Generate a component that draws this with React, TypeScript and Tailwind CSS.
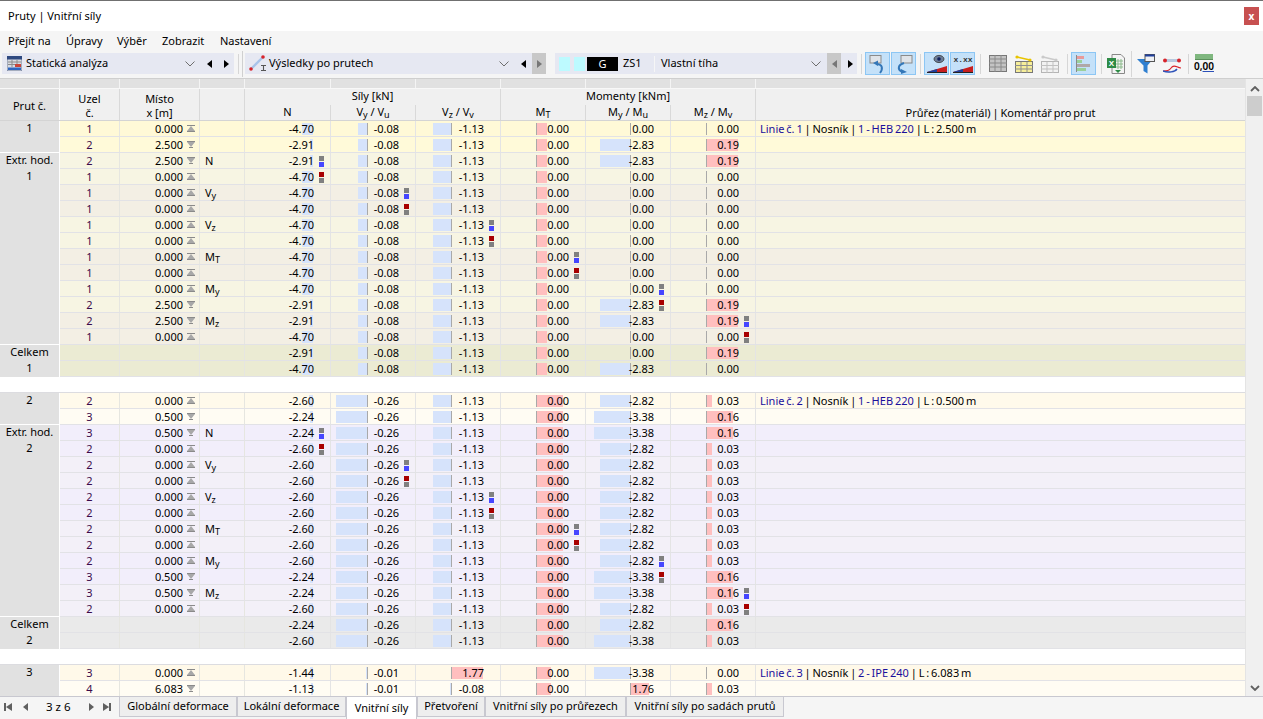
import React from "react";

type Row = {
  first?: string;
  firstLine?: boolean;
  node?: string;
  x?: string;
  dir?: "up" | "down";
  tag?: React.ReactNode;
  v: string[];
  mark?: [number, "max" | "min"];
  bg: string;
};

const cols = ["w-[86px]", "w-[85px]", "w-[85px]", "w-[85px]", "w-[85px]", "w-[85px]"];
const axes = [68, 36, 35, 35, 44, 35];

const barLen: Record<string, number>[] = [
  { "-4.70": -11, "-2.91": -3, "-2.60": -4, "-2.24": -3, "-1.44": -3, "-1.13": -2 },
  { "-0.08": -9, "-0.26": -31, "-0.01": -1 },
  { "-1.13": -18, "1.77": 32, "-0.08": -1 },
  {},
  { "-2.83": -30, "-2.82": -30, "-3.38": -36, "1.76": 19 },
  { "0.19": 32, "0.16": 27, "0.03": 6 },
];

const Sub = ({ c }: { c: string }) => <sub className="text-[9px]">{c}</sub>;

const tags: Record<string, React.ReactNode> = {
  N: "N",
  Vy: <>V<Sub c="y" /></>,
  Vz: <>V<Sub c="z" /></>,
  Mt: <>M<Sub c="T" /></>,
  My: <>M<Sub c="y" /></>,
  Mz: <>M<Sub c="z" /></>,
};

type Pt = { node: string; x: string; dir: "up" | "down"; v: string[] };

function group(
  id: string,
  a: Pt,
  b: Pt,
  ext: [string, Pt, Pt][],
  tot: [string[], string[]],
  bgs: { n1: string; n2: string; ea: string; eb: string; t: string },
): Row[] {
  const rows: Row[] = [
    { first: id, ...a, bg: bgs.n1 },
    { firstLine: true, ...b, bg: bgs.n2 },
  ];
  ext.forEach(([tag, p, q], i) => {
    const bg = i % 2 === 0 ? bgs.ea : bgs.eb;
    rows.push({
      first: i === 0 ? "Extr. hod." : undefined,
      ...p,
      tag: tags[tag],
      mark: [i, "max"],
      bg,
    });
    rows.push({
      first: i === 0 ? id : undefined,
      firstLine: i === 5,
      ...q,
      mark: [i, "min"],
      bg,
    });
  });
  rows.push({ first: "Celkem", v: tot[0], bg: bgs.t });
  rows.push({ first: id, v: tot[1], bg: bgs.t });
  return rows;
}

const g1a: Pt = { node: "1", x: "0.000", dir: "up", v: ["-4.70", "-0.08", "-1.13", "0.00", "0.00", "0.00"] };
const g1b: Pt = { node: "2", x: "2.500", dir: "down", v: ["-2.91", "-0.08", "-1.13", "0.00", "-2.83", "0.19"] };
const g2a: Pt = { node: "2", x: "0.000", dir: "up", v: ["-2.60", "-0.26", "-1.13", "0.00", "-2.82", "0.03"] };
const g2b: Pt = { node: "3", x: "0.500", dir: "down", v: ["-2.24", "-0.26", "-1.13", "0.00", "-3.38", "0.16"] };

const rows1 = group(
  "1",
  g1a,
  g1b,
  [
    ["N", g1b, g1a],
    ["Vy", g1a, g1a],
    ["Vz", g1a, g1a],
    ["Mt", g1a, g1a],
    ["My", g1a, g1b],
    ["Mz", g1b, g1a],
  ],
  [
    ["-2.91", "-0.08", "-1.13", "0.00", "0.00", "0.19"],
    ["-4.70", "-0.08", "-1.13", "0.00", "-2.83", "0.00"],
  ],
  { n1: "bg-[#fff9d7]", n2: "bg-[#fffad9]", ea: "bg-[#f7f5e3]", eb: "bg-[#f3efe4]", t: "bg-[#ebebd3]" },
);

const rows2 = group(
  "2",
  g2a,
  g2b,
  [
    ["N", g2b, g2a],
    ["Vy", g2a, g2a],
    ["Vz", g2a, g2a],
    ["Mt", g2a, g2a],
    ["My", g2a, g2b],
    ["Mz", g2b, g2a],
  ],
  [
    ["-2.24", "-0.26", "-1.13", "0.00", "-2.82", "0.16"],
    ["-2.60", "-0.26", "-1.13", "0.00", "-3.38", "0.03"],
  ],
  { n1: "bg-[#fffaeb]", n2: "bg-[#fffcf3]", ea: "bg-[#f2eefb]", eb: "bg-[#f3f0f8]", t: "bg-[#eaeaea]" },
);

const rows3: Row[] = [
  { first: "3", node: "3", x: "0.000", dir: "up", v: ["-1.44", "-0.01", "1.77", "0.00", "-3.38", "0.00"], bg: "bg-[#fff9e9]" },
  { node: "4", x: "6.083", dir: "down", v: ["-1.13", "-0.01", "-0.08", "0.00", "1.76", "0.03"], bg: "bg-[#fffcf3]" },
];

const XIcon = ({ dir }: { dir: "up" | "down" }) => (
  <svg width="8" height="7" viewBox="0 0 8 7" className="ml-[4px] shrink-0">
    {dir === "up" ? (
      <>
        <rect x="0" y="0" width="8" height="1" fill="#8a8a8a" />
        <path d="M4 1 L8 6 H0 Z" fill="#a8a8a8" />
        <rect x="0" y="6" width="8" height="1" fill="#8a8a8a" />
      </>
    ) : (
      <>
        <rect x="0" y="0" width="8" height="1" fill="#8a8a8a" />
        <path d="M0 1 H8 L4 6 Z" fill="#a8a8a8" />
        <rect x="2" y="6" width="4" height="1" fill="#8a8a8a" />
      </>
    )}
  </svg>
);

function Comment({ a, b, c }: { a: string; b: string; c: string }) {
  return (
    <span className="[word-spacing:-1px]">
      <span className="text-[#1a0f9c]">{a}</span> | <span>Nosník</span> |{" "}
      <span className="text-[#1a0f9c]">{b}</span> | {c}
    </span>
  );
}

function DataCell({ row, i, mt }: { row: Row; i: number; mt: number }) {
  const val = row.v[i];
  const len = i === 3 ? mt : barLen[i][val] ?? 0;
  const axis = axes[i];
  const left = len < 0 ? axis + len : axis;
  const marked = row.mark && row.mark[0] === i;
  return (
    <div className={`${cols[i]} relative h-full border-r border-[#e4e4e4] flex items-center justify-end pr-[16px]`}>
      {len !== 0 && (
        <div
          className={`absolute top-[2px] h-[12px] ${len < 0 ? "bg-[#d6e3fb]" : "bg-[#ffbfbf]"}`}
          style={{ left, width: Math.abs(len) }}
        />
      )}
      {i !== 0 && <div className="absolute top-[2px] h-[12px] w-px bg-[#a9a9a9]" style={{ left: axis }} />}
      <span className="relative">{val}</span>
      {marked && (
        <div className="absolute right-[6px] top-[3px] flex flex-col gap-px">
          <div className={`w-[5px] h-[5px] ${row.mark![1] === "max" ? "bg-[#808080]" : "bg-[#a80000]"}`} />
          <div className={`w-[5px] h-[5px] ${row.mark![1] === "max" ? "bg-[#4646ff]" : "bg-[#808080]"}`} />
        </div>
      )}
    </div>
  );
}

function TableRow({ row, mt, comment }: { row: Row; mt: number; comment?: React.ReactNode }) {
  return (
    <div className="flex h-4 shrink-0 leading-4">
      <div className={`w-[60px] h-full bg-[#e1e1e1] border-r border-white text-center leading-[14px] ${row.firstLine ? "border-b" : ""}`}>
        {row.first}
      </div>
      <div className={`flex flex-1 h-full border-b border-[#e2e2e6] ${row.bg}`}>
        <div className="w-[60px] h-full border-r border-[#e6e6e0] text-center text-[#3a0a4a]">{row.node}</div>
        <div className="w-[80px] h-full border-r border-[#e6e6e0] flex items-center justify-end pr-[4px]">
          {row.x && (
            <>
              <span>{row.x}</span>
              {row.dir && <XIcon dir={row.dir} />}
            </>
          )}
        </div>
        <div className="w-[45px] h-full border-r border-[#e6e6e0] pl-[5px]">{row.tag}</div>
        {row.v.map((_, i) => (
          <DataCell key={i} row={row} i={i} mt={mt} />
        ))}
        <div className="flex-1 h-full pl-[4px] whitespace-nowrap">{comment}</div>
      </div>
    </div>
  );
}

const BlankRow = () => <div className="h-4 shrink-0 bg-white border-b border-[#dcdce0]" />;

const BandCell = ({ w }: { w: string }) => <div className={`${w} h-full border-r border-[#f4f4f4]`} />;

const Chevron = () => (
  <svg width="10" height="6" viewBox="0 0 10 6" className="shrink-0">
    <path d="M0.5 0.5 L5 5 L9.5 0.5" fill="none" stroke="#6e6e6e" strokeWidth="1" />
  </svg>
);

const Tri = ({ dir, color = "#000" }: { dir: "l" | "r"; color?: string }) => (
  <svg width="5" height="8" viewBox="0 0 5 8" className="shrink-0">
    <path d={dir === "l" ? "M5 0 V8 L0 4 Z" : "M0 0 V8 L5 4 Z"} fill={color} />
  </svg>
);

const Sep = () => <div className="w-px h-[20px] bg-[#d6d6d6] shrink-0" />;

const Blue = ({ children }: { children: React.ReactNode }) => (
  <div className="w-[25px] h-[23px] bg-[#c4e1f9] border border-[#8cc6f4] flex items-center justify-center shrink-0">
    {children}
  </div>
);

const Wedge = () => (
  <>
    <path d="M1 19 L21 13 V19 Z" fill="#c81e1e" />
    <path d="M1 19 L11 16 V19 Z" fill="#1f3f9c" />
    <rect x="1" y="19" width="20" height="1" fill="#222" />
  </>
);

const TableIcon = ({ head, line, fade }: { head: string; line: string; fade?: boolean }) => (
  <svg width="18" height="18" viewBox="0 0 18 18" className={fade ? "opacity-50" : ""}>
    <rect x="0.5" y="6.5" width="17" height="11" fill={head} stroke="#777" />
    <path d="M0 10.5 H18 M0 14 H18 M6 7 V18 M12 7 V18" stroke="#8f8f8f" />
    <path d="M2 2 L15 5" stroke={line} strokeWidth="1.6" />
    <circle cx="2" cy="2" r="1.6" fill={line} />
    <circle cx="15" cy="5" r="1.6" fill={line} />
  </svg>
);

const HCell = ({ w, children }: { w: string; children?: React.ReactNode }) => (
  <div className={`${w} h-full border-r border-[#d9d9d9] flex flex-col items-center justify-center leading-[14px] pt-[2px]`}>
    {children}
  </div>
);

const SubHead = ({ w, children }: { w: string; children: React.ReactNode }) => (
  <div className={`${w} h-full border-r border-[#d9d9d9] text-center leading-[14px]`}>{children}</div>
);

const tabs: [string, string, boolean][] = [
  ["w-[118px]", "Globální deformace", false],
  ["w-[109px]", "Lokální deformace", false],
  ["w-[71px]", "Vnitřní síly", true],
  ["w-[68px]", "Přetvoření", false],
  ["w-[141px]", "Vnitřní síly po průřezech", false],
  ["w-[158px]", "Vnitřní síly po sadách prutů", false],
];

export default function App() {
  return (
    <div
      className="h-screen w-full overflow-hidden flex flex-col bg-[#f5f5f5] text-[11px] text-black"
      style={{ fontFamily: '"Noto Sans", "Liberation Sans", sans-serif' }}
    >
      {/* title */}
      <div className="h-[31px] shrink-0 bg-white border-t border-[#707070] flex items-center pl-[8px] pr-[4px] justify-between">
        <span>Pruty | Vnitřní síly</span>
        <div className="w-[15px] h-[18px] bg-[#c75050] text-white flex items-center justify-center text-[10px] font-bold">x</div>
      </div>

      {/* menu */}
      <div className="h-[20px] shrink-0 flex items-center pl-[8px]">
        <span className="w-[58px]">Přejít na</span>
        <span className="w-[51px]">Úpravy</span>
        <span className="w-[45px]">Výběr</span>
        <span className="w-[58px]">Zobrazit</span>
        <span>Nastavení</span>
      </div>

      {/* toolbar */}
      <div className="h-[28px] shrink-0 flex items-center border-b border-[#cfcfcf] pl-[2px] pb-[2px]">
        <div className="w-[232px] h-[21px] bg-[#e6e8f2] flex items-center shrink-0">
          <svg width="15" height="15" viewBox="0 0 15 15" className="ml-[5px] shrink-0">
            <rect x="0" y="0" width="15" height="15" fill="#d8dbe2" stroke="#5a6a8a" strokeWidth="0.8" />
            <rect x="0" y="0" width="15" height="3.5" fill="#2f4a80" />
            <path d="M1 6 H14 M1 8.5 H14 M5 4 V11 M10 4 V11" stroke="#8b8b8b" />
            <rect x="8" y="8" width="6" height="3" fill="#c8453a" />
            <rect x="1" y="11.5" width="13" height="2.5" fill="#2f66c0" />
          </svg>
          <span className="ml-[4px] flex-1">Statická analýza</span>
          <Chevron />
          <div className="w-[12px]" />
          <Tri dir="l" />
          <div className="w-[12px]" />
          <Tri dir="r" />
          <div className="w-[5px]" />
        </div>
        <div className="w-[11px] h-[26px] flex items-center pl-[4px] gap-[3px] shrink-0">
          <div className="w-px h-[20px] bg-[#d6d6d6]" />
          <div className="w-px h-[26px] bg-[#d0d0d0]" />
        </div>
        <div className="w-[301px] h-[21px] bg-[#e6e8f2] flex items-center shrink-0">
          <svg width="20" height="17" viewBox="0 0 20 17" className="ml-[4px] shrink-0">
            <path d="M2 14 L14 2" stroke="#a8c4ea" strokeWidth="2.4" />
            <circle cx="2" cy="14" r="1.8" fill="#d8232a" />
            <circle cx="14" cy="2" r="1.8" fill="#d8232a" />
            <path d="M12 10.5 H17 M12 15.5 H17 M14.5 10.5 V15.5" stroke="#555" strokeWidth="1.1" />
          </svg>
          <span className="flex-1">Výsledky po prutech</span>
          <Chevron />
          <div className="w-[12px]" />
          <Tri dir="l" />
          <div className="w-[6px]" />
          <div className="w-[14px] h-full bg-[#c8c8c8] flex items-center justify-center">
            <Tri dir="r" color="#777" />
          </div>
        </div>
        <div className="w-[9px] shrink-0" />
        <div className="w-[302px] h-[21px] bg-[#e6e8f2] flex items-center shrink-0">
          <div className="w-[11px] h-[14px] ml-[4px] bg-[#bdfaff]" />
          <div className="w-[11px] h-[14px] ml-[4px] bg-[#bdfaff]" />
          <div className="w-[31px] h-[14px] ml-[2px] bg-black text-white text-center leading-[14px]">G</div>
          <span className="w-[36px] pl-[5px]">ZS1</span>
          <div className="w-px h-[16px] bg-[#f6f6f6]" />
          <span className="ml-[6px] flex-1">Vlastní tíha</span>
          <Chevron />
          <div className="w-[6px]" />
          <div className="w-[14px] h-full bg-[#c8c8c8] flex items-center justify-center">
            <Tri dir="l" color="#777" />
          </div>
          <div className="w-[7px]" />
          <Tri dir="r" />
          <div className="w-[4px]" />
        </div>
        <div className="w-[8px] flex justify-center shrink-0"><Sep /></div>

        <Blue>
          <svg width="20" height="20" viewBox="0 0 20 20">
            <rect x="2" y="1.5" width="11" height="7.5" fill="#dfe3e8" stroke="#8a8a8a" />
            <path d="M8 10 C15 10 15 15 12 19" fill="none" stroke="#3477b8" strokeWidth="2" />
            <path d="M5 9 L10 6.5 L10 12 Z" fill="#3477b8" />
          </svg>
        </Blue>
        <div className="w-px shrink-0" />
        <Blue>
          <svg width="20" height="20" viewBox="0 0 20 20">
            <rect x="7" y="1.5" width="11" height="7.5" fill="#dfe3e8" stroke="#8a8a8a" />
            <path d="M10 9 C4 11 3 15 8 18" fill="none" stroke="#3477b8" strokeWidth="2" />
            <path d="M13 18 L7 15 L7 20 Z" fill="#3477b8" />
          </svg>
        </Blue>
        <div className="w-[8px] flex justify-center shrink-0"><Sep /></div>
        <Blue>
          <svg width="22" height="21" viewBox="0 0 22 21">
            <ellipse cx="13" cy="6" rx="5" ry="3.6" fill="#6b7b95" stroke="#333" strokeWidth="0.8" />
            <circle cx="13" cy="6" r="1.8" fill="#10205c" />
            <Wedge />
          </svg>
        </Blue>
        <div className="w-px shrink-0" />
        <Blue>
          <svg width="22" height="21" viewBox="0 0 22 21">
            <text x="11" y="9" textAnchor="middle" fontSize="8" fontWeight="700" fill="#333" fontFamily="Liberation Mono, monospace">x.xx</text>
            <Wedge />
          </svg>
        </Blue>
        <div className="w-[10px] flex justify-center shrink-0"><Sep /></div>
        <div className="w-[26px] flex justify-center shrink-0">
          <svg width="18" height="17" viewBox="0 0 18 17">
            <rect x="0.5" y="0.5" width="17" height="16" fill="#c4c4c4" stroke="#777" />
            <path d="M0 4 H18 M0 8 H18 M0 12 H18 M6 0 V17 M12 0 V17" stroke="#8a8a8a" />
          </svg>
        </div>
        <div className="w-[26px] flex justify-center shrink-0">
          <TableIcon head="#f6ee9a" line="#e8c400" />
        </div>
        <div className="w-[26px] flex justify-center shrink-0">
          <TableIcon head="#f0f0f0" line="#a0a0a0" fade />
        </div>
        <div className="w-[8px] flex justify-center shrink-0"><Sep /></div>
        <Blue>
          <svg width="18" height="19" viewBox="0 0 18 19">
            <rect x="1" y="1" width="1" height="17" fill="#8a8a8a" />
            <rect x="2" y="2" width="7" height="3" fill="#e89a9a" />
            <rect x="2" y="6" width="5" height="3" fill="#9ad09a" />
            <rect x="2" y="10" width="13" height="3" fill="#b0a8a8" />
            <rect x="2" y="14" width="9" height="3" fill="#9ad09a" />
          </svg>
        </Blue>
        <div className="w-[10px] flex justify-center shrink-0"><Sep /></div>
        <div className="w-[20px] flex justify-center shrink-0">
          <svg width="18" height="20" viewBox="0 0 18 20">
            <path d="M5 0.5 H14 L17.5 4 V19.5 H5 Z" fill="#f4f4f4" stroke="#888" />
            <path d="M8 7 H16 M8 10 H16 M8 13 H16 M11 5 V15 M14 5 V15" stroke="#8dbb8d" />
            <rect x="0" y="4" width="9" height="10" fill="#2e8b46" />
            <text x="4.5" y="12" textAnchor="middle" fontSize="8" fontWeight="700" fill="#fff" fontFamily="Liberation Sans, sans-serif">X</text>
            <path d="M8 16 H14 L11 19 Z" fill="#2e8b46" />
          </svg>
        </div>
        <div className="w-[5px]" />
        <div className="w-px h-[26px] bg-[#d6d6d6] shrink-0" />
        <div className="w-[5px]" />
        <div className="w-[18px] flex justify-center shrink-0">
          <svg width="18" height="20" viewBox="0 0 18 20">
            <path d="M0 5 H16 L10.5 11.5 V19.5 L6.5 17 V11.5 Z" fill="#2f7fd0" />
            <rect x="8" y="0.5" width="9.5" height="7" fill="#eef0f4" stroke="#555" />
            <rect x="8" y="0.5" width="9.5" height="2" fill="#1f3f9c" />
          </svg>
        </div>
        <div className="w-[8px]" />
        <div className="w-[18px] flex justify-center shrink-0">
          <svg width="18" height="18" viewBox="0 0 18 18">
            <rect x="2" y="4" width="14" height="3" fill="#b9c9de" />
            <circle cx="2" cy="5.5" r="2" fill="#d8232a" />
            <circle cx="16" cy="5.5" r="2" fill="#d8232a" />
            <path d="M0 16 C4 16 6 16 9 12 C12 9 14 13 18 13" fill="none" stroke="#d8232a" strokeWidth="1.2" />
            <path d="M0 16 C5 18 12 17 14 14" fill="none" stroke="#2b50b8" strokeWidth="1.4" />
          </svg>
        </div>
        <div className="w-[14px] flex justify-center shrink-0"><Sep /></div>
        <div className="w-[18px] flex flex-col items-center shrink-0">
          <div className="w-[18px] h-[6px] bg-[#7fb77f] border-b border-[#5a8f5a]" />
          <span className="text-[10px] leading-[13px] font-semibold">
            0,<span className="underline decoration-[#2b50b8]">00</span>
          </span>
        </div>
      </div>

      {/* table + scrollbar */}
      <div className="flex-1 min-h-0 flex border-b border-[#c8c8d0]">
        <div className="flex-1 min-w-0 flex flex-col overflow-hidden">
          <div className="h-[9px] shrink-0 flex bg-[#e1e1e1]">
            <BandCell w="w-[60px]" />
            <BandCell w="w-[60px]" />
            <BandCell w="w-[80px]" />
            <BandCell w="w-[45px]" />
            {cols.map((c, i) => (
              <BandCell key={i} w={c} />
            ))}
          </div>
          <div className="h-[33px] shrink-0 flex bg-[#f0f0f0] border-b border-[#d4d4d4] border-t border-t-[#f8f8f8]">
            <div className="w-[60px] h-full bg-[#e1e1e1] border-r border-white flex items-center justify-center pt-[4px]">Prut č.</div>
            <HCell w="w-[60px]"><span>Uzel</span><span>č.</span></HCell>
            <HCell w="w-[80px]"><span>Místo</span><span>x [m]</span></HCell>
            <HCell w="w-[45px]" />
            <div className="w-[256px] h-full border-r border-[#d9d9d9] flex flex-col">
              <div className="h-[16px] text-center leading-[14px]">Síly [kN]</div>
              <div className="flex-1 flex">
                <SubHead w="w-[86px]">N</SubHead>
                <SubHead w="w-[85px]">V<Sub c="y" /> / V<Sub c="u" /></SubHead>
                <div className="w-[84px] text-center leading-[14px]">V<Sub c="z" /> / V<Sub c="v" /></div>
              </div>
            </div>
            <div className="w-[255px] h-full border-r border-[#d9d9d9] flex flex-col">
              <div className="h-[16px] text-center leading-[14px]">Momenty [kNm]</div>
              <div className="flex-1 flex">
                <SubHead w="w-[85px]">M<Sub c="T" /></SubHead>
                <SubHead w="w-[85px]">M<Sub c="y" /> / M<Sub c="u" /></SubHead>
                <div className="w-[84px] text-center leading-[14px]">M<Sub c="z" /> / M<Sub c="v" /></div>
              </div>
            </div>
            <div className="flex-1 flex items-end justify-center leading-[15px] [word-spacing:-1px]">Průřez (materiál) | Komentář pro prut</div>
          </div>
          {rows1.map((r, i) => (
            <TableRow
              key={"a" + i}
              row={r}
              mt={11}
              comment={i === 0 ? <Comment a="Linie č. 1" b="1 - HEB 220" c="L : 2.500 m" /> : undefined}
            />
          ))}
          <BlankRow />
          {rows2.map((r, i) => (
            <TableRow
              key={"b" + i}
              row={r}
              mt={27}
              comment={i === 0 ? <Comment a="Linie č. 2" b="1 - HEB 220" c="L : 0.500 m" /> : undefined}
            />
          ))}
          <BlankRow />
          {rows3.map((r, i) => (
            <TableRow
              key={"c" + i}
              row={r}
              mt={15}
              comment={i === 0 ? <Comment a="Linie č. 3" b="2 - IPE 240" c="L : 6.083 m" /> : undefined}
            />
          ))}
        </div>
        <div className="w-[18px] shrink-0 bg-[#f0f0f0] border-l border-[#e4e4e4] flex flex-col items-center">
          <svg width="10" height="6" viewBox="0 0 10 6" className="mt-[7px]">
            <path d="M1 5 L5 1 L9 5" fill="none" stroke="#606060" strokeWidth="1.8" />
          </svg>
          <div className="w-[15px] h-[20px] mt-[4px] bg-[#cdcdcd]" />
          <div className="flex-1" />
          <svg width="10" height="6" viewBox="0 0 10 6" className="mb-[5px]">
            <path d="M1 1 L5 5 L9 1" fill="none" stroke="#606060" strokeWidth="1.8" />
          </svg>
        </div>
      </div>

      {/* tabs */}
      <div className="h-[22px] shrink-0 flex items-start">
        <div className="w-[119px] h-[20px] shrink-0 flex items-center text-[#000]">
          <svg width="8" height="8" viewBox="0 0 8 8" className="ml-[4px]"><path d="M0 0 H2 V8 H0 Z M8 0 V8 L2 4 Z" fill="#606060" /></svg>
          <div className="w-[11px]" />
          <Tri dir="l" color="#606060" />
          <span className="ml-[18px] w-[24px] text-[#000] text-[11.5px] whitespace-nowrap">3 z 6</span>
          <div className="w-[19px]" />
          <Tri dir="r" color="#606060" />
          <div className="w-[9px]" />
          <svg width="8" height="8" viewBox="0 0 8 8"><path d="M0 0 V8 L6 4 Z M6 0 H8 V8 H6 Z" fill="#606060" /></svg>
        </div>
        {tabs.map(([w, label, active]) => (
          <div
            key={label}
            className={
              active
                ? `${w} h-[22px] shrink-0 bg-white border-x border-[#c8c8d0] flex items-center justify-center pt-px whitespace-nowrap`
                : `${w} h-[20px] shrink-0 bg-[#eeeeee] border-x border-b border-[#c8c8d0] flex items-center justify-center whitespace-nowrap`
            }
          >
            {label}
          </div>
        ))}
      </div>
    </div>
  );
}
